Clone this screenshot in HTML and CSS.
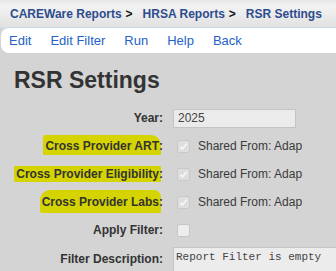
FILE: index.html
```html
<!DOCTYPE html>
<html lang="en">
<head>
    <meta charset="UTF-8">
    <title>RSR Settings</title>
    <link rel="stylesheet" href="styles.css">
</head>
<body>
    <div class="crumbs">
        <a href="#">CAREWare Reports</a><span class="sep">&gt;</span>
        <a href="#">HRSA Reports</a><span class="sep">&gt;</span>
        <a href="#">RSR Settings</a>
    </div>

    <nav class="menu">
        <a href="#">Edit</a>
        <a href="#">Edit Filter</a>
        <a href="#">Run</a>
        <a href="#">Help</a>
        <a href="#">Back</a>
    </nav>

    <h1>RSR Settings</h1>

    <div class="form">
        <label class="lbl">Year:</label>
        <div class="field"><input class="text" type="text" value="2025" readonly></div>

        <label class="lbl"><mark class="hl hl-art">Cross Provider ART</mark>:</label>
        <div class="field">
            <span class="check on"><svg width="13" height="13" viewBox="0 0 13 13"><polyline points="3.2,6.6 5.4,9 9.8,3.6" /></svg></span>
            <span class="shared">Shared From: Adap</span>
        </div>

        <label class="lbl"><mark class="hl hl-elig">Cross Provider Eligibility</mark>:</label>
        <div class="field">
            <span class="check on"><svg width="13" height="13" viewBox="0 0 13 13"><polyline points="3.2,6.6 5.4,9 9.8,3.6" /></svg></span>
            <span class="shared">Shared From: Adap</span>
        </div>

        <label class="lbl"><mark class="hl hl-labs">Cross Provider Labs</mark>:</label>
        <div class="field">
            <span class="check on"><svg width="13" height="13" viewBox="0 0 13 13"><polyline points="3.2,6.6 5.4,9 9.8,3.6" /></svg></span>
            <span class="shared">Shared From: Adap</span>
        </div>

        <label class="lbl">Apply Filter:</label>
        <div class="field"><span class="check"></span></div>

        <label class="lbl lbl-top">Filter Description:</label>
        <div class="field field-top"><textarea class="desc" readonly>Report Filter is empty</textarea></div>
    </div>
</body>
</html>
```

FILE: styles.css
```css
body {
    font-family: 'Liberation Sans', Arial, sans-serif;
    background-color: #d4d4d4;
    margin: 0;
    color: #333;
    overflow: hidden;
}
a {
    text-decoration: none;
}
.crumbs {
    display: flex;
    align-items: baseline;
    height: 16px;
    padding: 6px 10px;
    background: linear-gradient(#e6e6e6, #f3f3f3 20%, #e0e0e0);
    font-size: 12px;
    font-weight: bold;
    line-height: 16px;
}
.crumbs a {
    color: #2d4c8e;
}
.crumbs .sep {
    color: #111;
    padding: 0 10px 0 4px;
}
.menu {
    display: flex;
    gap: 19px;
    height: 15px;
    margin-left: 1px;
    padding: 5px 0 5px 8px;
    background: white;
    border-top: 1px solid #c9d8ec;
    border-radius: 8px 0 0 8px;
    font-size: 13px;
    line-height: 15px;
    margin-top: -1px;
}
.menu a {
    color: #2462c6;
}
h1 {
    margin: 13px 0 0 14px;
    font-size: 23px;
    line-height: 28px;
    color: #333;
}
.form {
    display: grid;
    grid-template-columns: 163px 1fr;
    grid-auto-rows: 28px;
    column-gap: 10px;
    align-items: center;
    margin-top: 9px;
    padding-top: 1px;
}
.lbl {
    text-align: right;
    white-space: nowrap;
    font-size: 12px;
    font-weight: bold;
    color: #333;
}
.lbl-top {
    align-self: start;
    padding-top: 8px;
}
.field {
    display: flex;
    align-items: center;
    white-space: nowrap;
}
.field-top {
    align-self: start;
    align-items: flex-start;
    box-sizing: border-box;
    height: 27px;
    padding-top: 3px;
    overflow: hidden;
}
.text {
    box-sizing: border-box;
    width: 123px;
    height: 19px;
    margin: 0;
    padding: 0 4px;
    border: 1px solid #c4c4c4;
    background: #ebebeb;
    font-family: 'Liberation Sans', Arial, sans-serif;
    font-size: 12px;
    color: #444;
    outline: none;
}
.check {
    box-sizing: border-box;
    width: 13px;
    height: 13px;
    margin-left: 4px;
    border: 1px solid #c6c6c6;
    border-radius: 2px;
    background: #ededed;
}
.check.on {
    background: #dedede;
    border-color: #c9c9c9;
}
.check svg {
    display: block;
    margin: -1px;
}
.check polyline {
    fill: none;
    stroke: #f8f8f8;
    stroke-width: 1.6;
}
.shared {
    margin-left: 8px;
    font-size: 12px;
    color: #3a3a3a;
}
.hl {
    background: #d5d400;
    color: inherit;
}
.hl-art {
    padding: 4px 2px 2px 2px;
    margin: 0 -2px;
    border-radius: 2px 10px 1px 1px;
}
.hl-elig {
    padding: 1px 2px 1px 2px;
    margin: 0 -2px;
    border-radius: 1px;
}
.hl-labs {
    padding: 5px 2px 4px 2px;
    margin: 0 -2px;
    border-radius: 10px 7px 1px 2px;
}
.desc {
    box-sizing: border-box;
    flex-shrink: 0;
    width: 170px;
    height: 40px;
    margin: 0;
    padding: 3px 2px;
    border: 1px solid #c4c4c4;
    background: #ececec;
    font-family: 'Liberation Mono', 'Courier New', monospace;
    font-size: 11px;
    color: #444;
    resize: none;
    outline: none;
}
```
